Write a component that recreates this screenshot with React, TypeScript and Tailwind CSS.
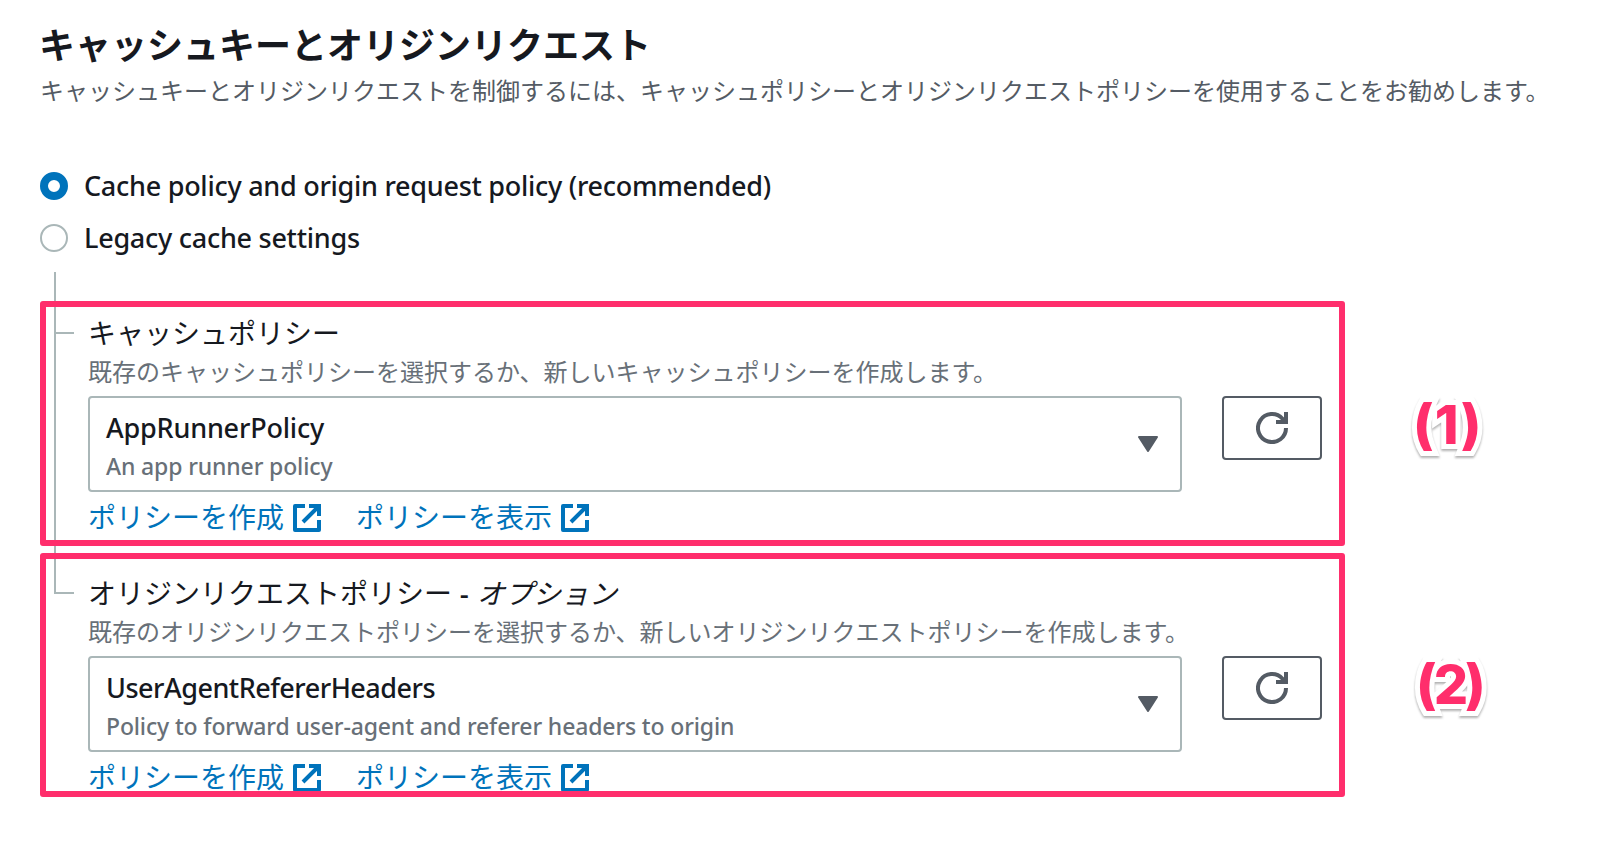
import clsx from "clsx"

type Policy = {
  label: string
  optional?: string
  description: string
  name: string
  nameClass: string
  detail: string
}

const policies: Policy[] = [
  {
    label: "キャッシュポリシー",
    description: "既存のキャッシュポリシーを選択するか、新しいキャッシュポリシーを作成します。",
    name: "AppRunnerPolicy",
    nameClass: "tracking-[-0.2px]",
    detail: "An app runner policy",
  },
  {
    label: "オリジンリクエストポリシー",
    optional: "オプション",
    description: "既存のオリジンリクエストポリシーを選択するか、新しいオリジンリクエストポリシーを作成します。",
    name: "UserAgentRefererHeaders",
    nameClass: "tracking-[-0.5px]",
    detail: "Policy to forward user-agent and referer headers to origin",
  },
]

function ExternalIcon() {
  return (
    <svg viewBox="0 0 28 28" className="mt-px size-7" fill="none" stroke="currentColor" strokeWidth="4">
      <path d="M12 2H2v24h24V16" strokeLinejoin="round" />
      <path d="M16 2h10v10M25 3 10 18" />
    </svg>
  )
}

function RefreshIcon() {
  return (
    <svg viewBox="0 0 32 32" className="size-8" fill="none" stroke="currentColor" strokeWidth="4">
      <path d="M30 16A14 14 0 1 1 26.5 6.8L29 10" />
      <path d="M30 0v10H20" />
    </svg>
  )
}

function Radio({ label, checked }: { label: string; checked?: boolean }) {
  return (
    <label className="flex h-13 items-center gap-4">
      <span
        className={clsx(
          "size-7 shrink-0 rounded-full bg-white",
          checked ? "border-8 border-[#0073bb]" : "border-2 border-[#aab7b8]",
        )}
      />
      <span className="text-[27px] leading-11 font-medium tracking-[-0.27px] whitespace-nowrap">{label}</span>
    </label>
  )
}

function PolicyLink({ children }: { children: React.ReactNode }) {
  return (
    <a className="flex items-center gap-[9px] text-[28px] leading-11 text-[#0073bb]">
      {children}
      <ExternalIcon />
    </a>
  )
}

function PolicyField({ policy }: { policy: Policy }) {
  return (
    <section className="h-[260px] pl-8">
      <h3 className="h-11 text-[28px] leading-[42px] whitespace-pre">
        {policy.label}
        {policy.optional && (
          <>
            <span className="font-medium tracking-[0.5px]">{" - "}</span>
            <em>{policy.optional}</em>
          </>
        )}
      </h3>
      <p className="h-10 text-2xl leading-8 text-[#687078]">{policy.description}</p>
      <div className="flex items-start gap-10">
        <div className="flex h-24 w-[1094px] items-center justify-between rounded-[4px] border-2 border-[#aab7b8] pr-[22px] pl-4">
          <div className="pt-1">
            <div className={clsx("text-[27px] leading-10 font-medium", policy.nameClass)}>{policy.name}</div>
            <div className="text-[23px] leading-9 font-medium tracking-[-0.14px] text-[#687078]">{policy.detail}</div>
          </div>
          <svg viewBox="0 0 20 16" className="h-4 w-5" fill="#545b64" stroke="#545b64" strokeWidth="2" strokeLinejoin="round">
            <path d="M1 1h18L10 15z" />
          </svg>
        </div>
        <button className="flex h-16 w-[100px] items-center justify-center rounded-[4px] border-2 border-[#545b64] text-[#545b64]">
          <RefreshIcon />
        </button>
      </div>
      <div className="mt-[3px] flex gap-[35px]">
        <PolicyLink>ポリシーを作成</PolicyLink>
        <PolicyLink>ポリシーを表示</PolicyLink>
      </div>
    </section>
  )
}

// Numbered sticker: white outline behind the digits and a soft shadow below
function Marker({ text, className }: { text: string; className: string }) {
  return (
    <div
      className={clsx(
        "absolute font-['Inter',sans-serif] text-[54px] leading-[60px] font-extrabold text-[#ff2e6c]",
        className,
      )}
    >
      <span className="inline-block [-webkit-text-stroke:10px_white] [paint-order:stroke_fill] [stroke-linejoin:round] drop-shadow-[0_2px_1px_rgba(0,0,0,0.3)]">
        {text}
      </span>
    </div>
  )
}

export default function App() {
  return (
    <main className="relative h-[842px] w-[1598px] overflow-hidden bg-white pl-10 font-['Noto_Sans','Noto_Sans_CJK_JP',sans-serif] text-[#16191f]">
      <header className="pt-[21px]">
        <h2 className="-ml-px text-4xl leading-[50px] font-bold">キャッシュキーとオリジンリクエスト</h2>
        <p className="mt-0.5 text-2xl leading-9 whitespace-nowrap text-[#545b64]">
          キャッシュキーとオリジンリクエストを制御するには、キャッシュポリシーとオリジンリクエストポリシーを使用することをお勧めします。
        </p>
      </header>

      <div className="mt-[51px]">
        <Radio label="Cache policy and origin request policy (recommended)" checked />
        <Radio label="Legacy cache settings" />
      </div>

      <div className="mt-2 ml-3.5 flex">
        {/* tree connector */}
        <div className="w-0.5 shrink-0">
          <div className="h-[322px] w-5 border-b-2 border-l-2 border-[#aab7b8] pt-[60px]">
            <div className="h-0.5 w-full bg-[#aab7b8]" />
          </div>
        </div>
        <div className="pt-10">
          {policies.map((policy) => (
            <PolicyField key={policy.name} policy={policy} />
          ))}
        </div>
      </div>

      {/* highlight frames */}
      <div className="absolute top-[301px] left-10 h-[245px] w-[1305px] rounded-[3px] border-6 border-[#ff2e6c]" />
      <div className="absolute top-[553px] left-10 h-[244px] w-[1305px] rounded-[3px] border-6 border-[#ff2e6c]" />
      <Marker text="(1)" className="top-[395px] left-[1413px] tracking-[1px]" />
      <Marker text="(2)" className="top-[655px] left-[1416px] tracking-[-3px]" />
    </main>
  )
}
